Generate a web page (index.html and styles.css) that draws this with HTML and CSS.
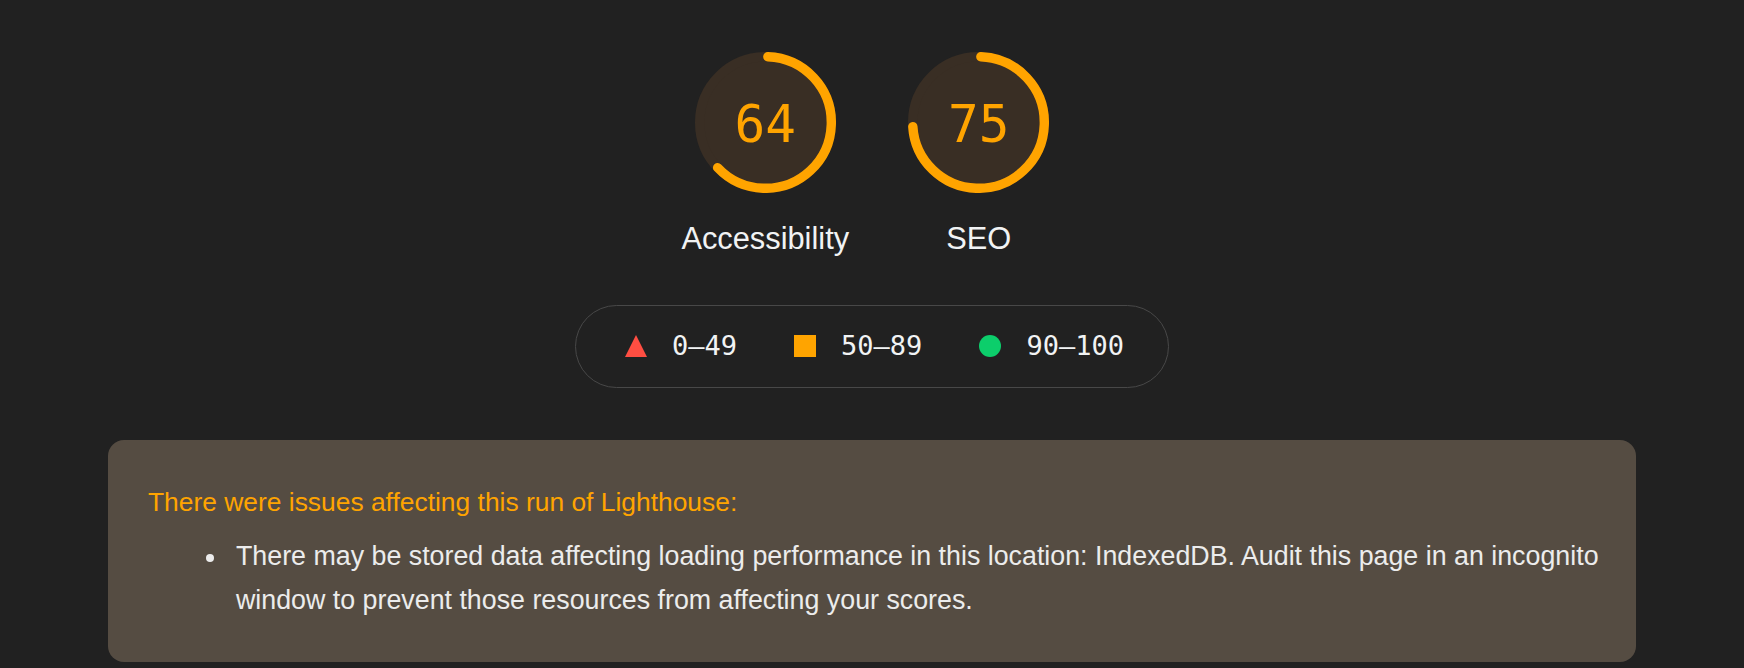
FILE: index.html
```
<!DOCTYPE html>
<html lang="en">
<head>
<meta charset="utf-8">
<title>Lighthouse report</title>
<link rel="stylesheet" href="styles.css">
</head>
<body>
<main class="report">
  <section class="scores">
    <div class="gauge-wrapper">
      <div class="gauge">
        <svg class="gauge-svg" viewBox="0 0 120 120" width="141" height="141">
          <circle class="gauge-base" r="56" cx="60" cy="60" stroke-width="8"></circle>
          <circle class="gauge-arc" r="56" cx="60" cy="60" stroke-width="8" transform="rotate(-87.95 60 60)" style="stroke-dasharray: 219.19 351.86"></circle>
        </svg>
        <div class="gauge-value">64</div>
      </div>
      <div class="gauge-label">Accessibility</div>
    </div>
    <div class="gauge-wrapper">
      <div class="gauge">
        <svg class="gauge-svg" viewBox="0 0 120 120" width="141" height="141">
          <circle class="gauge-base" r="56" cx="60" cy="60" stroke-width="8"></circle>
          <circle class="gauge-arc" r="56" cx="60" cy="60" stroke-width="8" transform="rotate(-87.95 60 60)" style="stroke-dasharray: 257.9 351.86"></circle>
        </svg>
        <div class="gauge-value">75</div>
      </div>
      <div class="gauge-label">SEO</div>
    </div>
  </section>

  <div class="scorescale">
    <span class="range"><span class="icon icon-fail"></span><span class="range-text">0–49</span></span>
    <span class="range"><span class="icon icon-average"></span><span class="range-text">50–89</span></span>
    <span class="range"><span class="icon icon-pass"></span><span class="range-text">90–100</span></span>
  </div>

  <div class="warnings">
    <p class="warnings-title">There were issues affecting this run of Lighthouse:</p>
    <ul class="warnings-list">
      <li class="warning-item">There may be stored data affecting loading performance in this location: IndexedDB. Audit this page in an incognito window to prevent those resources from affecting your scores.</li>
    </ul>
  </div>
</main>
</body>
</html>
```
FILE: styles.css
```
html, body {
  margin: 0;
  padding: 0;
}

body {
  background: #212121;
  color: #f1f3f4;
  font-family: "Liberation Sans", Arial, Helvetica, sans-serif;
}

.report {
  display: flex;
  flex-direction: column;
  padding-top: 52px;
}

.scores {
  display: flex;
  justify-content: center;
}

.gauge-wrapper {
  width: 213.5px;
  display: flex;
  flex-direction: column;
  align-items: center;
}

.gauge {
  display: grid;
  width: 141px;
  height: 141px;
}

.gauge-svg {
  grid-area: 1 / 1;
  display: block;
}

.gauge-base {
  fill: #392e24;
  stroke: #392e24;
}

.gauge-arc {
  fill: none;
  stroke: #ffa400;
  stroke-linecap: round;
}

.gauge-value {
  grid-area: 1 / 1;
  align-self: center;
  justify-self: center;
  padding-top: 4px;
  font-family: "DejaVu Sans Mono", Menlo, monospace;
  font-size: 51px;
  line-height: 1;
  color: #ffa400;
}

.gauge-label {
  margin-top: 27px;
  font-size: 30.8px;
  line-height: 37px;
  color: #f1f3f4;
  white-space: nowrap;
}

.scorescale {
  align-self: center;
  display: flex;
  align-items: center;
  gap: 57px;
  margin-top: 48px;
  padding: 26px 44px 28px 49px;
  border: 1px solid #484848;
  border-radius: 60px;
}

.range {
  display: flex;
  align-items: center;
  gap: 25px;
}

.icon {
  display: block;
  width: 22px;
  height: 22px;
}

.icon-fail {
  width: 0;
  height: 0;
  border-left: 11px solid transparent;
  border-right: 11px solid transparent;
  border-bottom: 22px solid #ff4e42;
}

.icon-average {
  background: #ffa400;
}

.icon-pass {
  background: #0cce6b;
  border-radius: 50%;
}

.range-text {
  font-family: "DejaVu Sans Mono", Menlo, monospace;
  font-size: 27px;
  line-height: 27px;
  color: #f1f3f4;
}

.warnings {
  margin: 52px 108px 0;
  padding: 40px 30px 40px 40px;
  background: #554c42;
  border-radius: 16px;
  font-size: 26.4px;
}

.warnings-title {
  margin: 0;
  line-height: 44px;
  color: #ffa400;
}

.warnings-list {
  margin: 10px 0 0;
  padding: 0 0 0 88px;
  list-style: none;
}

.warning-item {
  font-size: 26.8px;
  line-height: 44px;
  color: #ececec;
}

.warning-item::before {
  content: "";
  display: inline-block;
  width: 8px;
  height: 8px;
  margin-left: -29.7px;
  margin-right: 21.7px;
  border-radius: 50%;
  background: #ececec;
  vertical-align: middle;
}
```
